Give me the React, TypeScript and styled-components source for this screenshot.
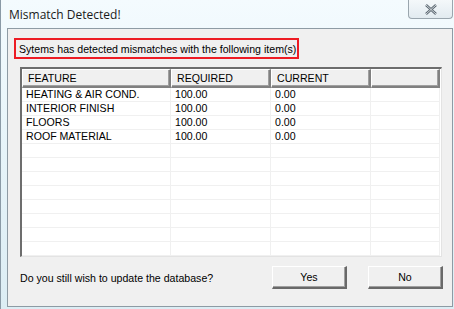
import styled, { createGlobalStyle } from 'styled-components'

const GlobalStyle = createGlobalStyle`
  html, body {
    margin: 0;
    padding: 0;
    background: #dcebf3;
  }
  #root {
    width: 454px;
    height: 309px;
  }
`

const Frame = styled.div`
  box-sizing: border-box;
  width: 454px;
  height: 309px;
  display: flex;
  flex-direction: column;
  padding: 0 1px 2px 0;
  border-left: 1px solid #8a9aa6;
  background: linear-gradient(180deg, #f4fbfe 0%, #e8f5fa 40%, #dcedf4 100%);
  font-family: "Liberation Sans", Arial, sans-serif;
`

const TitleBar = styled.div`
  height: 28px;
  display: flex;
  align-items: flex-start;
  justify-content: space-between;
  padding-left: 8px;
`

const Title = styled.span`
  margin-top: 6px;
  font-family: "Open Sans", "Noto Sans", sans-serif;
  font-size: 12px;
  color: #1a1a1a;
`

const CloseButton = styled.div`
  box-sizing: border-box;
  width: 45px;
  height: 19px;
  border: 1px solid #9aa6ae;
  border-top: none;
  border-radius: 0 0 4px 4px;
  background: linear-gradient(180deg, #f4f8fa 0%, #e2ebf0 100%);
  display: flex;
  align-items: center;
  justify-content: center;
`

const Client = styled.div`
  flex: 1;
  margin-left: 6px;
  border: 1px solid #8e9ba4;
  background: #f0f0f0;
  display: flex;
  flex-direction: column;
  padding: 9px 9px 0 6px;
  font-size: 10.6px;
  color: #000;
`

const Notice = styled.div`
  box-sizing: border-box;
  width: 285px;
  height: 21px;
  border: 2px solid #ed1c24;
  padding-left: 3px;
  display: flex;
  align-items: center;
  white-space: nowrap;
`

const ListView = styled.div`
  box-sizing: border-box;
  margin: 8px 0 0 6px;
  width: 422px;
  height: 190px;
  border-style: solid;
  border-width: 2px 1px 1px 2px;
  border-color: #6d6d6d #e3e3e3 #e3e3e3 #6d6d6d;
  background: #fff;
  overflow: hidden;
`

const Grid = styled.div`
  display: grid;
  grid-template-columns: 149px 100px 100px 69px;
`

const HeaderCell = styled.div`
  box-sizing: border-box;
  height: 19px;
  padding-left: 5px;
  display: flex;
  align-items: center;
  background: #f0f0f0;
  border-style: solid;
  border-width: 1px 2px 2px 1px;
  border-color: #fff #808080 #808080 #fff;
  box-shadow: inset -1px -1px 0 #a0a0a0;
`

const Cell = styled.div`
  box-sizing: border-box;
  height: 14px;
  padding-left: 4px;
  line-height: 13px;
  border-right: 1px solid #f0f0f0;
  border-bottom: 1px solid #f0f0f0;
  white-space: nowrap;
  overflow: hidden;
`

const Footer = styled.div`
  display: flex;
  align-items: center;
  margin: 9px 0 0 6px;
  width: 423px;
`

const Question = styled.span`
  flex: 1;
`

const Button = styled.button`
  box-sizing: border-box;
  width: 75px;
  height: 23px;
  margin-left: ${(p: { $gap?: number }) => p.$gap ?? 0}px;
  padding: 0;
  background: #f0f0f0;
  font-family: "Liberation Sans", Arial, sans-serif;
  font-size: 10.6px;
  color: #000;
  border-style: solid;
  border-width: 1px 2px 2px 1px;
  border-color: #fff #696969 #696969 #fff;
  box-shadow: inset -1px -1px 0 #a0a0a0;
`

const columns = ['FEATURE', 'REQUIRED', 'CURRENT', '']

const items: Array<[string, string, string]> = [
  ['HEATING & AIR COND.', '100.00', '0.00'],
  ['INTERIOR FINISH', '100.00', '0.00'],
  ['FLOORS', '100.00', '0.00'],
  ['ROOF MATERIAL', '100.00', '0.00'],
]

function MismatchDialog() {
  const rows = [...items]
  while (rows.length < 12) rows.push(['', '', ''])

  return (
    <Frame>
      <TitleBar>
        <Title>Mismatch Detected!</Title>
        <CloseButton>
          <svg width="14" height="11" viewBox="0 0 14 11">
            <path d="M2 1 L12 10 M12 1 L2 10" stroke="#5a6670" strokeWidth="2.4" fill="none" />
            <path d="M2 1 L12 10 M12 1 L2 10" stroke="#eef2f4" strokeWidth="0.8" fill="none" />
          </svg>
        </CloseButton>
      </TitleBar>
      <Client>
        <Notice>Sytems has detected mismatches with the following item(s)</Notice>
        <ListView>
          <Grid>
            {columns.map((c, i) => (
              <HeaderCell key={i}>{c}</HeaderCell>
            ))}
            {rows.map((r, ri) =>
              [...r, ''].map((v, ci) => <Cell key={ri + '-' + ci}>{v}</Cell>)
            )}
          </Grid>
        </ListView>
        <Footer>
          <Question>Do you still wish to update the database?</Question>
          <Button>Yes</Button>
          <Button $gap={21}>No</Button>
        </Footer>
      </Client>
    </Frame>
  )
}

export default function App() {
  return (
    <>
      <GlobalStyle />
      <MismatchDialog />
    </>
  )
}
